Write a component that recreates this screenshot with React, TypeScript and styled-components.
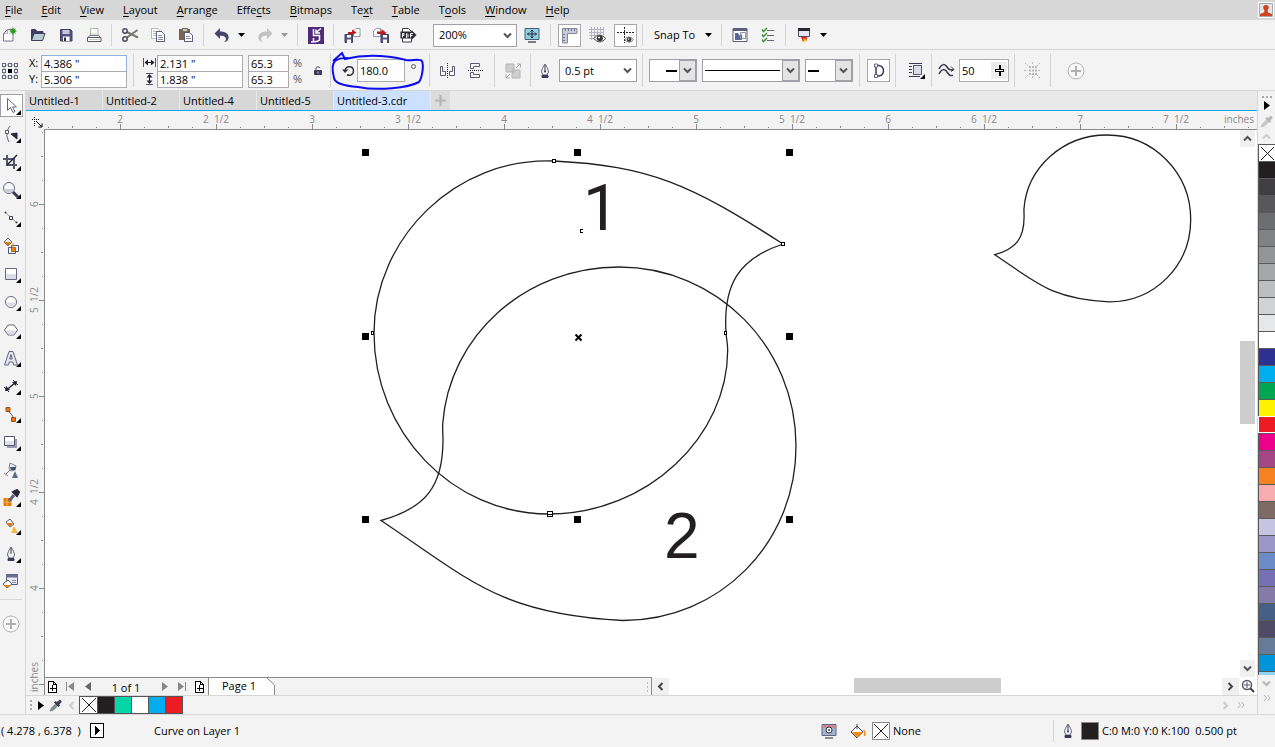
import React from "react";
import styled, { createGlobalStyle } from "styled-components";

const INK = "#3a3a58";
const LINE = "#d7d7d7";
const FACE = "#f3f3f3";

const GlobalStyle = createGlobalStyle`
  * { box-sizing: border-box; }
  body { margin: 0; background: ${FACE}; color: #000; }
  body, button, input, select { font-family: "Open Sans", "Noto Sans", sans-serif; font-size: 11px; line-height: 16px; }
  button { border: 0; padding: 0; background: none; color: inherit; display: inline-flex; align-items: center; justify-content: center; }
  svg { display: block; flex: none; }
`;

/* ---------- shared parts ---------- */

const Window = styled.div`
  display: flex;
  flex-direction: column;
  min-height: 100vh;
`;

const MenuBar = styled.nav`
  display: flex;
  gap: 19px;
  height: 20px;
  padding: 0 1px 0 5px;
  background: ${LINE};
`;

const MenuItem = styled.button`
  u { text-underline-offset: 2px; }
`;

const AccountButton = styled.button`
  width: 16px;
  height: 16px;
  margin: 2px 0 0 auto;
  background: #fff;
  border: 1px solid #fff;
`;

const ToolBar = styled.div<{ $h: number; $left?: number }>`
  display: flex;
  align-items: center;
  height: ${(p) => p.$h}px;
  padding-top: 1px;
  padding-left: ${(p) => p.$left ?? 0}px;
  border-bottom: 1px solid ${LINE};
`;

const ToolButton = styled.button<{ $w?: number; $align?: string }>`
  display: inline-flex;
  align-items: center;
  flex: none;
  width: ${(p) => p.$w ?? 28}px;
  height: 24px;
  justify-content: ${(p) => p.$align ?? "center"};
`;

const ListButton = styled(ToolButton)`
  width: 15px;
  padding-left: 2px;
  justify-content: flex-start;
`;

const Framed = styled.span`
  display: flex;
  align-items: center;
  justify-content: center;
  width: 23px;
  height: 23px;
  background: #fff;
  border: 1px solid #a8a8ac;
`;

const Separator = styled.span<{ $h?: number; $m?: number }>`
  flex: none;
  width: 1px;
  height: ${(p) => p.$h ?? 22}px;
  margin: 0 ${(p) => p.$m ?? 4}px 0 ${(p) => (p.$m ?? 4) - 1}px;
  background: #d4d4d4;
`;

const SelectBox = styled.span<{ $w: number }>`
  position: relative;
  flex: none;
  display: flex;
  width: ${(p) => p.$w}px;
  height: 23px;
  border: 1px solid #a0a0a6;
  background: #fff;
  select {
    appearance: none;
    flex: 1;
    min-width: 0;
    border: 0;
    padding: 0 0 0 5px;
    background: transparent;
    color: #000;
  }
`;

const SelectArrow = styled.span<{ $boxed?: boolean }>`
  position: absolute;
  inset: 0 0 0 auto;
  width: 17px;
  display: flex;
  align-items: center;
  justify-content: center;
  pointer-events: none;
  background: ${(p) => (p.$boxed ? "#e4e4e4" : "transparent")};
  border: ${(p) => (p.$boxed ? "1px solid #a0a0a6" : "0")};
`;

const LineSample = styled.span<{ $l: number; $w: number; $thin?: boolean }>`
  position: absolute;
  left: ${(p) => p.$l}px;
  top: 10px;
  width: ${(p) => p.$w}px;
  height: ${(p) => (p.$thin ? 1 : 2)}px;
  background: #000;
  pointer-events: none;
`;

const SnapButton = styled.button`
  width: 71px;
  height: 24px;
  padding: 0 6px 0 7px;
  justify-content: space-between;
`;

/* ---------- property bar parts ---------- */

const Stack = styled.div<{ $w?: number; $m?: string }>`
  display: flex;
  flex: none;
  flex-direction: column;
  width: ${(p) => (p.$w ? p.$w + "px" : "auto")};
  margin: ${(p) => p.$m ?? "0"};
`;

const SideLabel = styled.label`
  height: 16px;
`;

const Percent = styled.span`
  color: #55555c;
`;

const SideIcon = styled.span`
  display: flex;
  align-items: center;
  justify-content: center;
  height: 16px;
`;

const NumberField = styled.input<{ $accent?: boolean }>`
  width: 100%;
  height: 17px;
  margin-bottom: -1px;
  padding: 0 2px;
  border: 1px solid ${(p) => (p.$accent ? "#8cb4dc" : "#ababb0")};
  background: #fff;
  color: #000;
`;

const TallField = styled.input<{ $w: number }>`
  width: ${(p) => p.$w}px;
  height: 23px;
  padding: 0 2px;
  border: 1px solid #ababb0;
  background: #fff;
  color: #000;
`;

const SliderField = styled.span`
  display: flex;
  flex: none;
  width: 50px;
  height: 23px;
  border: 1px solid #ababb0;
  background: #fff;
  input { width: 31px; padding: 0 2px; border: 0; background: none; color: #000; }
  button { width: 16px; background: #ececec; margin: 2px 0; }
`;

const DegreeRing = styled.span`
  width: 5px;
  height: 5px;
  margin: 0 0 8px 6px;
  border: 1px solid #555;
  border-radius: 50%;
`;

const PropertyWrap = styled.div`
  position: relative;
`;

const Annotation = styled.svg`
  position: absolute;
  left: 328px;
  top: 0;
  pointer-events: none;
`;

/* ---------- work area ---------- */

const WorkArea = styled.div`
  display: flex;
  flex: 1;
`;

const ToolBox = styled.div`
  display: flex;
  flex-direction: column;
  flex: none;
  width: 26px;
  border-right: 1px solid ${LINE};
`;

const Tool = styled.button<{ $active?: boolean }>`
  position: relative;
  width: 23px;
  height: 23px;
  margin: 3px 0 2px;
  padding-left: 1px;
  justify-content: flex-start;
  background: ${(p) => (p.$active ? "#fff" : "transparent")};
  border: 1px solid ${(p) => (p.$active ? "#a0a0a6" : "transparent")};
`;

const Flyout = styled.span`
  position: absolute;
  right: 1px;
  bottom: 1px;
  border-left: 5px solid transparent;
  border-bottom: 5px solid #000;
`;

const ToolBoxRule = styled.hr`
  width: 22px;
  height: 1px;
  margin: 4px 0 12px;
  border: 0;
  background: ${LINE};
`;

const Center = styled.div`
  display: flex;
  flex-direction: column;
  flex: 1;
  min-width: 0;
`;

const TabStrip = styled.div`
  display: flex;
  height: 20px;
  background: #e9e9e9;
  border-bottom: 1px solid #00a8f8;
`;

const DocTab = styled.button<{ $active?: boolean }>`
  width: ${(p) => (p.$active ? 97 : 77)}px;
  padding-left: 3px;
  justify-content: flex-start;
  background: ${(p) => (p.$active ? "#cbe1ff" : LINE)};
  border-right: 1px solid #e9e9e9;
`;

const NewTab = styled.button`
  width: 19px;
  background: #dcdcdc;
`;

const ticks = (dir: string) =>
  `linear-gradient(${dir}, #8a8a8a 1px, transparent 1px)`;

const RulerRow = styled.div`
  display: flex;
  height: 19px;
  background: ${FACE};
`;

const RulerOrigin = styled.span`
  flex: none;
  width: 18px;
  padding: 6px 0 0 6px;
`;

const RulerText = styled.div`
  color: #8a8a8a;
  font-size: 10px;
  line-height: 16px;
  white-space: pre;
`;

const HRuler = styled(RulerText)`
  display: flex;
  flex: 1;
  min-width: 0;
  overflow: hidden;
  padding-left: 28px;
  border-bottom: 1px solid #8a8a8a;
  background-image: ${ticks("to right")}, ${ticks("to right")}, ${ticks("to right")};
  background-size: 96px 5px, 48px 2px, 24px 1px;
  background-position: 76px 100%, 28px calc(100% - 1px), 4px calc(100% - 1px);
  background-repeat: repeat-x;
`;

const HMark = styled.span`
  flex: none;
  width: 96px;
  text-align: center;
`;

const HUnit = styled.span`
  margin-left: auto;
  padding-right: 4px;
`;

const CanvasRow = styled.div`
  display: flex;
  flex: 1;
`;

const VRuler = styled(RulerText)`
  display: flex;
  flex-direction: column;
  flex: none;
  width: 19px;
  padding-top: 26px;
  border-right: 1px solid #8a8a8a;
  background-image: ${ticks("to bottom")}, ${ticks("to bottom")}, ${ticks("to bottom")};
  background-size: 5px 96px, 2px 48px, 1px 24px;
  background-position: 100% 74px, calc(100% - 1px) 26px, calc(100% - 1px) 2px;
  background-repeat: repeat-y;
`;

const VMark = styled.span<{ $h: number; $end?: boolean }>`
  height: ${(p) => p.$h}px;
  width: 16px;
  text-align: ${(p) => (p.$end ? "start" : "center")};
  writing-mode: vertical-rl;
  transform: rotate(180deg);
`;

const CanvasColumn = styled.div`
  display: flex;
  flex-direction: column;
  flex: 1;
  min-width: 0;
`;

const CanvasMain = styled.div`
  display: flex;
  flex: 1;
  background: #fff;
`;

const Canvas = styled.main`
  flex: 1;
  min-width: 0;
  min-height: 547px;
  overflow: hidden;
  background: #fff;
`;

const VScroll = styled.div`
  display: flex;
  flex-direction: column;
  flex: none;
  width: 17px;
  padding-right: 2px;
  background: #fff;
`;

const ScrollButton = styled.button<{ $w?: number }>`
  flex: none;
  width: ${(p) => p.$w ?? 17}px;
  height: 17px;
  background: #f0f0f0;
`;

const Track = styled.div<{ $vertical?: boolean }>`
  display: flex;
  flex-direction: ${(p) => (p.$vertical ? "column" : "row")};
  flex: 1;
`;

const TrackSpace = styled.span<{ $grow: number }>`
  flex: ${(p) => p.$grow} 1 0;
`;

const Thumb = styled.span<{ $w: number; $h: number }>`
  flex: none;
  width: ${(p) => p.$w}px;
  height: ${(p) => p.$h}px;
  background: #cdcdcd;
`;

const PageBar = styled.div`
  display: flex;
  height: 18px;
`;

const PageNav = styled.div`
  display: flex;
  align-items: center;
  width: 607px;
  flex: none;
  border-top: 1px solid #8a8a8a;
  border-right: 1px solid #8a8a8a;
`;

const NavButton = styled.button<{ $w: number }>`
  flex: none;
  width: ${(p) => p.$w}px;
  height: 16px;
`;

const PageCount = styled.span`
  width: 60px;
  padding-top: 2px;
  text-align: center;
`;

const PageTab = styled.button`
  position: relative;
  height: 17px;
  width: 67px;
  padding: 0 16px 1px 13px;
  justify-content: flex-start;
  white-space: nowrap;
  background: #fff;
  border-left: 1px solid #8a8a8a;
`;

const TabCorner = styled.svg`
  position: absolute;
  right: 0;
  top: 0;
`;

const Grip = styled.span`
  width: 3px;
  height: 12px;
  margin-left: auto;
  margin-right: 2px;
  background: radial-gradient(circle, #bbb 1px, transparent 1px) 0 0 / 3px 4px;
`;

const HScroll = styled.div`
  display: flex;
  flex: 1;
  background: #fff;
  padding: 1px 1px 0 0;
`;

const PaletteBar = styled.div`
  display: flex;
  align-items: center;
  height: 19px;
  padding: 0 8px 0 3px;
  border-top: 1px solid ${LINE};
`;

const SwatchRow = styled.div`
  display: flex;
  border: 1px solid #555;
`;

const DocSwatch = styled.button<{ $c: string }>`
  width: 17px;
  height: 16px;
  background: ${(p) => p.$c};
  & + & { border-left: 1px solid #555; }
`;

const ColorColumn = styled.aside`
  display: flex;
  flex: none;
  flex-direction: column;
  align-items: center;
  width: 18px;
  padding-top: 5px;
  border-left: 1px solid ${LINE};
`;

const Swatch = styled.button<{ $c: string; $selected?: boolean; $h?: number }>`
  width: 100%;
  height: ${(p) => p.$h ?? 17}px;
  background: ${(p) => p.$c};
  border-left: 1px solid ${(p) => (p.$selected ? "#fff" : "#5a5a5a")};
  border-top: 1px solid ${(p) => (p.$selected ? "#fff" : "#5a5a5a")};
  border-bottom: ${(p) => (p.$selected ? "1px solid #fff" : "0")};
`;

const PaletteButton = styled.button<{ $h: number }>`
  width: 16px;
  height: ${(p) => p.$h}px;
`;

/* ---------- status bar ---------- */

const StatusBar = styled.footer`
  display: flex;
  align-items: center;
  height: 33px;
  padding: 0 0 0 1px;
  border-top: 1px solid ${LINE};
  white-space: pre;
`;

const StatusText = styled.span<{ $w?: number }>`
  width: ${(p) => (p.$w ? p.$w + "px" : "auto")};
`;

const StatusGroup = styled.div<{ $w: number }>`
  display: flex;
  flex: none;
  align-items: center;
  width: ${(p) => p.$w}px;
`;

const StatusIcon = styled.span<{ $w: number }>`
  flex: none;
  width: ${(p) => p.$w}px;
`;

const StatusButton = styled.button<{ $w: number }>`
  flex: none;
  width: ${(p) => p.$w}px;
  justify-content: flex-start;
`;

const ColorBox = styled.span<{ $c: string }>`
  flex: none;
  width: 18px;
  height: 18px;
  margin-right: 3px;
  background: ${(p) => p.$c};
  border: 1px solid #8a8a8a;
`;

/* ---------- icons ---------- */

type IconProps = { w: number; h: number; children: React.ReactNode; crisp?: boolean };
const Icon = ({ w, h, children, crisp }: IconProps) => (
  <svg width={w} height={h} viewBox={`0 0 ${w} ${h}`} fill="none" stroke={INK}
    shapeRendering={crisp ? "crispEdges" : "auto"} aria-hidden="true">
    {children}
  </svg>
);

const Caret = ({ c = "#000" }: { c?: string }) => (
  <Icon w={7} h={4}><path d="M0 0h7L3.500 4z" fill={c} stroke="none" /></Icon>
);
const ChevronDown = ({ c = "#555" }: { c?: string }) => (
  <Icon w={9} h={7}><path d="M1 1.500L4.500 5 8 1.500" stroke={c} strokeWidth="2" /></Icon>
);
const ChevronUp = ({ c = "#555" }: { c?: string }) => (
  <Icon w={9} h={7}><path d="M1 5.500L4.500 2 8 5.500" stroke={c} strokeWidth="2" /></Icon>
);
const ChevronLeft = ({ c = "#444" }: { c?: string }) => (
  <Icon w={7} h={9}><path d="M5.500 1L2 4.500 5.500 8" stroke={c} strokeWidth="2" /></Icon>
);
const ChevronRight = ({ c = "#444" }: { c?: string }) => (
  <Icon w={7} h={9}><path d="M1.500 1L5 4.500 1.500 8" stroke={c} strokeWidth="2" /></Icon>
);
const DoubleChevron = () => (
  <Icon w={8} h={8}><path d="M1 1l2.500 3L1 7M4.500 1L7 4 4.500 7" stroke="#b5b5b5" /></Icon>
);
const PlayTriangle = ({ c = "#000", left = false }: { c?: string; left?: boolean }) => (
  <Icon w={6} h={9}><path d={left ? "M6 0v9L0 4.500z" : "M0 0v9l6-4.500z"} fill={c} stroke="none" /></Icon>
);
const EndTriangle = ({ left = false }: { left?: boolean }) => (
  <Icon w={8} h={9}>
    <path d={left ? "M8 0v9L2 4.500z" : "M0 0v9l6-4.500z"} fill="#888" stroke="none" />
    <path d={left ? "M.5 0v9" : "M7.500 0v9"} stroke="#888" />
  </Icon>
);
const CirclePlus = () => (
  <Icon w={18} h={18}>
    <circle cx="9" cy="9" r="8" stroke="#b5b5b5" fill="#f7f7f7" />
    <path d="M9 4v10M4 9h10" stroke="#b0b0b0" strokeWidth="2" />
  </Icon>
);
const PageAdd = () => (
  <Icon w={11} h={12} crisp>
    <path d="M1.500.5h5l3 3v8h-8z" stroke="#000" fill="#fff" />
    <path d="M5.500 4v6M3 7.500h6" stroke="#000" />
    <path d="M6.500.5v3h3" stroke="#000" />
  </Icon>
);
const Pen = () => (
  <Icon w={12} h={16}>
    <path d="M6 1C4 4 2.500 7 2.500 9L4 12h4l1.500-3C9.500 7 8 4 6 1z" fill="#f2f2f6" stroke="#62627c" />
    <path d="M6 2v6" stroke="#3a3a58" /><circle cx="6" cy="8.500" r="1" fill="#3a3a58" stroke="none" />
    <path d="M3 12.500h6v2H3z" fill="#3a3a58" />
  </Icon>
);
const Dropper = ({ c = "#3a3a4e", t = "#7a8a90" }: { c?: string; t?: string }) => (
  <Icon w={13} h={13}>
    <path d="M1 12l1.500-3L7 4.500 9 6.500 4.500 11z" fill={t} stroke={t} />
    <path d="M5.500 3.500l4 4 1.200-1.200-.8-.8 2-2.200c.8-1-.8-2.600-1.900-1.800l-2 2-.9-.9z" fill={c} stroke={c} />
  </Icon>
);
const NewDoc = () => (
  <Icon w={17} h={16}>
    <path d="M3.500 6.500l4-4h5.500v11.500h-9.500z" fill="#fff" stroke="#77778c" />
    <path d="M3.500 6.500h4v-4" stroke="#a8a8b8" />
    <path d="M13 .5v7M9.500 4h7M10.500 1.500l5 5M15.500 1.500l-5 5" stroke="#2b9a1e" />
    <circle cx="13" cy="4" r="2.500" fill="#2b9a1e" stroke="none" />
  </Icon>
);
const Open = () => (
  <Icon w={16} h={16}>
    <path d="M1.500 13V2.500h4l1.500 2h6V7" fill="#3f3f66" stroke="#3f3f5c" />
    <path d="M1.500 13.500l2.500-7h11l-2.500 7z" fill="#b8ccd6" stroke="#3f3f5c" />
  </Icon>
);
const Floppy = () => (
  <Icon w={14} h={14}>
    <path d="M1.500 1.500h10l1.500 1.500v10h-11.500z" fill="#54547c" stroke="#3f3f66" />
    <path d="M3.500 2h7v4h-7z" fill="#c8c8dc" stroke="none" />
    <path d="M4 8.500h6.500V13H4z" fill="#fff" stroke="none" /><path d="M5 9.500h2V13H5z" fill="#2c2c50" stroke="none" />
  </Icon>
);
const Printer = () => (
  <Icon w={16} h={16}>
    <path d="M4.500 9V1.500h7.500V9" fill="#fff" stroke="#a9b8a4" /><path d="M5 6h7v3H5z" fill="#cfe8d8" stroke="none" />
    <path d="M1.500 12l2-3.500h9.500l2 3.500" stroke="#77778c" />
    <path d="M1.500 10.500h13.500v4H1.500z" fill="#fff" stroke="#55556e" /><path d="M3 12.500h11" stroke="#c8c8d4" />
  </Icon>
);
const Scissors = () => (
  <Icon w={18} h={16}>
    <path d="M6 5l11 5.500M6 10.500L16.500 3" stroke="#77776e" strokeWidth="2" />
    <circle cx="4" cy="4" r="2.200" stroke="#4a4a62" strokeWidth="1.500" />
    <circle cx="4" cy="12" r="2.200" stroke="#4a4a62" strokeWidth="1.500" />
  </Icon>
);
const Copy = () => (
  <Icon w={16} h={16} crisp>
    <path d="M1.500 1.500h6l2 2v8h-8z" fill="#fff" stroke="#a9c4ba" /><path d="M3 4.500h4M3 6.500h4M3 8.500h4" stroke="#a9c4ba" />
    <path d="M6.500 4.500h5l3 3v7h-8z" fill="#fff" stroke="#5c5c80" /><path d="M8 8.500h4M8 10.500h5M8 12.500h5" stroke="#8c8ca6" />
  </Icon>
);
const Paste = () => (
  <Icon w={16} h={16} crisp>
    <path d="M1 2h11v11H1z" fill="#7a654c" stroke="none" /><path d="M4 1h5v3H4z" fill="#c9c9c9" stroke="#77705f" />
    <path d="M6.500 5.500h5l3 3v6h-8z" fill="#fff" stroke="#5c5c80" /><path d="M8 9.500h4M8 11.500h5" stroke="#8c8ca6" />
  </Icon>
);
const Undo = ({ c = "#46466a", flip = false }: { c?: string; flip?: boolean }) => (
  <Icon w={16} h={16}>
    <g transform={flip ? "translate(16 0) scale(-1 1)" : undefined}>
      <path d="M6 1v3.500c6 0 9 2.500 8.500 6.500-.3 2.500-2 4-4.500 4 2-1.500 2.500-3 1.500-4.500C10.500 9 9 8.700 6 8.700V12L.5 6.500z" fill={c} stroke="none" />
    </g>
  </Icon>
);
const SearchContent = () => (
  <Icon w={16} h={17}>
    <path d="M0 0h16v17H0z" fill="#4e2a78" stroke="none" />
    <path d="M13 1.500L8.500 5M8 2.500V6h4M5.500 2v6.500h6V13c-1.500 1.500-4 2-8.500 2M5.500 15v-4" stroke="#fff" strokeWidth="1.500" />
  </Icon>
);
const Transfer = ({ out = false }: { out?: boolean }) => (
  <Icon w={17} h={16}>
    {out
      ? <><path d="M1.500 9.500V4l3-2.500h4v8z" fill="#fff" stroke="#8a9a9a" /><path d="M5 4.500h4.500V2l5 4-5 4V7H5z" fill="#c0181c" stroke="none" /></>
      : <><path d="M9.500 9.500V4l2.500-2.500h4v8z" fill="#fff" stroke="#8a9a9a" /><path d="M4 5h4V2.500L12.500 5.500 8 8.500V7H4z" fill="#c0181c" stroke="none" /></>}
    <g transform={out ? "translate(8 7)" : "translate(0 7)"}>
      <path d="M1 .5h7.500v8H1z" fill="#54547c" stroke="#3f3f66" />
      <path d="M3 1h4v2.500H3zM3 5.500h4V9H3z" fill="#fff" stroke="none" />
    </g>
  </Icon>
);
const Pdf = () => (
  <Icon w={17} h={16}>
    <path d="M2.500 5V1.500h6l3 3M2.500 11v4h9v-3" fill="#fff" stroke="#3a3a4c" />
    <path d="M.5 4.500h11V3l5 5-5 5v-1.500H.5z" fill="#2a2a34" stroke="none" />
    <path d="M2.500 10.500v-4h1.500v2H2.500M6.500 6.500v4H7l1-1v-2l-1-1zM10.500 10.500v-4H13M10.500 8.500h2" stroke="#fff" />
  </Icon>
);
const FullScreen = () => (
  <Icon w={16} h={16}>
    <path d="M1 1.500h14v11H1z" fill="#8fd0e4" stroke="#44607c" />
    <path d="M8 3v8M3.500 7h9M6.500 4.500L8 3l1.500 1.500M6.500 9.500L8 11l1.500-1.500M5 5.500L3.500 7 5 8.500M11 5.500L12.500 7 11 8.500" stroke="#223" />
    <path d="M4 15h8" stroke="#7a7a8c" strokeWidth="2" />
  </Icon>
);
const Rulers = () => (
  <Icon w={17} h={17}>
    <path d="M1.500 1.500h14.500v5H6.500V16h-5z" fill="#c8cdd8" stroke="#8088a0" />
    <path d="M4.500 2v2M7.500 2v2M10.500 2v2M13.500 2v2M2 7.500h2M2 10.500h2M2 13.500h2" stroke="#6c7490" />
  </Icon>
);
const Eye = () => (
  <g><path d="M5 11.500C8 7 13.500 7 16.500 11.500c-3 4.500-8.500 4.500-11.500 0z" fill="#ececec" stroke="#4c4c50" />
    <circle cx="10.800" cy="11.300" r="3" fill="#333" stroke="none" /><circle cx="10" cy="10.500" r="1" fill="#fff" stroke="none" /></g>
);
const GridEye = () => (
  <Icon w={17} h={17}>
    <path d="M2.500 0v13M5.500 0v12M8.500 0v8M11.500 0v7M14.500 0v8M0 2.500h15M0 5.500h15M0 8.500h7M0 11.500h5" stroke="#b4b4c6" /><Eye />
  </Icon>
);
const GuideEye = () => (
  <Icon w={17} h={17}>
    <path d="M7.500 0v16M0 5.500h17" stroke="#222" strokeDasharray="2 1" /><g transform="translate(4 4) scale(.75)"><Eye /></g>
  </Icon>
);
const Options = () => (
  <Icon w={16} h={16}>
    <path d="M1 1.500h14v13H1z" fill="#fff" stroke="#5c5c80" /><path d="M1 2.500h14" stroke="#5c5c80" strokeWidth="3" />
    <path d="M3 6h3l2 3 2-2v6H3z" fill="#5a6896" stroke="none" /><path d="M8.500 5.500h5v6h-5z" stroke="#8890b4" />
  </Icon>
);
const Checks = () => (
  <Icon w={14} h={16}>
    <path d="M6 3.500h7M6 8.500h7M6 13.500h7" stroke="#66667e" />
    <path d="M1 2.500l1.500 2L6 1M1 7.500l1.500 2L6 6M1 12.500l1.500 2L6 11" stroke="#3c9636" strokeWidth="1.500" />
  </Icon>
);
const Launcher = () => (
  <Icon w={14} h={16}>
    <path d="M1.500 1.500h11v8h-11z" fill="#e4e4f0" stroke="#4c4c6c" /><path d="M1 2.500h12" stroke="#26262e" strokeWidth="3" />
    <path d="M4 10h6l-.5 4-2-1.500L6 15z" fill="#e8281c" stroke="none" /><path d="M6.500 11.500l2.500.5-2 4z" fill="#ffc400" stroke="none" />
  </Icon>
);
const ObjectOrigin = () => (
  <Icon w={16} h={16}>
    <path d="M2 2h12v12H2z" stroke="#9a9aaa" />
    {[0.5, 6.5, 12.5].map((x) => [0.5, 6.5, 12.5].map((y) => {
      const mid = x === 6.5 && y === 6.5;
      return <rect key={`${x}-${y}`} x={x} y={y} width="3" height="3" fill={mid ? "#000" : FACE} stroke={mid ? "#000" : "#66667c"} />;
    }))}
  </Icon>
);
const WidthIcon = () => (
  <Icon w={13} h={9}><path d="M.5 0v9M12.500 0v9" stroke="#55556c" /><path d="M2 4.500h9" stroke="#222230" /><path d="M5 1.500v6L1.500 4.500zM8 1.500v6l3.500-3z" fill="#222230" stroke="none" /></Icon>
);
const HeightIcon = () => (
  <Icon w={9} h={12}><path d="M1 .5h7M1 11.500h7" stroke="#55556c" /><path d="M4.500 2v8" stroke="#222230" /><path d="M1.500 4.500h6l-3-3.500zM1.500 7.500h6l-3 3.500z" fill="#222230" stroke="none" /></Icon>
);
const Lock = () => (
  <Icon w={8} h={9}><path d="M2 4V2c0-1.500 4-1.500 4 0" stroke="#4c4c6c" /><path d="M.5 4.500h7v4h-7z" fill="#3c3c5c" /><path d="M4 5.500v2" stroke="#ccd" /></Icon>
);
const Rotate = () => (
  <Icon w={13} h={13}><path d="M3 7c0-6 8.500-5.500 8.500 0 0 4-4 5-6.500 3.800" stroke="#333340" strokeWidth="1.500" /><path d="M0 5.500h6.500L3 9z" fill="#333340" stroke="none" /></Icon>
);
const MirrorH = () => (
  <Icon w={17} h={15}><path d="M8.500 0v15" stroke="#222" strokeDasharray="1 1" />
    <path d="M1.500 3.500h2v5h3v4h-5zM15.500 3.500h-2v5h-3v4h5z" stroke="#5c5c70" fill="#fafafa" /></Icon>
);
const MirrorV = () => (
  <Icon w={15} h={17}><path d="M0 8.500h15" stroke="#222" strokeDasharray="1 1" />
    <path d="M2.500 1.500h9v3h-6v2h-3zM2.500 15.500h9v-3h-6v-2h-3z" stroke="#5c5c70" fill="#fafafa" /></Icon>
);
const Ungroup = () => (
  <Icon w={17} h={16}><path d="M1 1h8v8H1zM7 7h8v8H7z" fill="#cfcfcf" stroke="#b4b4b4" />
    <path d="M11 5l4-4M12 1h3.500v3.500M5 11l-4 4M1 11.500V15h3.500" stroke="#a8a8a8" /></Icon>
);
const CloseCurve = () => (
  <Icon w={12} h={16}><path d="M3 2.500h3c6 1 6 9.500 0 10.500H3M3 4v8" stroke="#3a3a58" strokeWidth="1.500" />
    <path d="M1.500 1h3v3h-3zM1.500 11.500h3v3h-3z" fill="#fff" stroke="#66667c" /></Icon>
);
const WrapText = () => (
  <Icon w={18} h={17}><path d="M1 1.500h13M1 4.500h3M1 7.500h3M1 10.500h3M1 14.500h11" stroke="#3a3a58" />
    <path d="M5.500 3.500h8v9h-8z" fill="#dcdce8" stroke="#55556c" /><path d="M17 12v5h-5z" fill="#000" stroke="none" /></Icon>
);
const Smooth = () => (
  <Icon w={17} h={15}><path d="M1 6c3-6 6-5 8-2s3 3 6.500 2.500M1 11c3-6 6-5 8-2s3 4 6 3.500" stroke="#3a3a4c" strokeWidth="1.500" />
    <path d="M13 3.500l3 3-3 2" stroke="#3a3a4c" /></Icon>
);
const SliderKnob = () => (
  <Icon w={11} h={11} crisp><path d="M5.500 0v11" stroke="#000" strokeWidth="2" /><path d="M1.500 4.500h8v2h-8z" fill="#fff" stroke="#000" /></Icon>
);
const BoundingBox = () => (
  <Icon w={17} h={17}>
    <path d="M5 5h8M5 8.500h8M5 12h8" stroke="#b8b8b8" strokeWidth="2" strokeDasharray="2 1" />
    <path d="M1 1l3 3M16 1l-3 3M1 16l3-3M16 16l-3-3M8.500 0v3M8.500 14v3M0 8.500h3M14 8.500h3" stroke="#b8b8b8" strokeDasharray="2 1" />
  </Icon>
);
const Person = () => (
  <Icon w={14} h={14}><path d="M.5.500h13v13H.5z" fill="#dfe8ec" stroke="#a0a8b0" />
    <path d="M7 2c4 0 3 4 1.500 5.500L9 9.500l4 1.500v2H1v-2l4-1.500.5-2C4 6 3 2 7 2z" fill="#cf4420" stroke="none" /></Icon>
);

const toolIcons: { name: string; fly?: boolean; icon: React.ReactNode }[] = [
  { name: "Pick", fly: true, icon: <path d="M5.500 1.500v12l3-3 2.500 5 2-1-2.500-4.500h4z" fill="#fff" stroke="#66667c" /> },
  { name: "Shape", fly: true, icon: <><path d="M8 1C4 6 4 11 7 17" stroke="#62627c" /><path d="M3.500 5.500h3v3h-3z" fill="#fff" stroke="#55556c" /><path d="M9 9l6-1v6z" fill="#26263a" stroke="#26263a" /></> },
  { name: "Crop", fly: true, icon: <><path d="M1 6h11v10M5 2v10h10" stroke="#55556c" strokeWidth="2" /><path d="M5 12L15 2" stroke="#26263a" strokeWidth="1.500" /></> },
  { name: "Zoom", fly: true, icon: <><circle cx="7" cy="7" r="5.500" fill="#f8f8fb" stroke="#66667e" /><path d="M2 8h10c-1 5-9 5-10 0z" fill="#cfcfdc" stroke="none" /><path d="M11 11l5 5" stroke="#3c3c4c" strokeWidth="3" /></> },
  { name: "Freehand", fly: true, icon: <><path d="M3 3l12 11" stroke="#8c8c98" /><path d="M7.500 7.500h3v3h-3z" fill="#fff" stroke="#3c3c4c" /><path d="M3 3l1 1M14 13l1 1" stroke="#3c3c4c" strokeWidth="2" /></> },
  { name: "Smart fill", icon: <><path d="M2 5l4-4 4 4-4 4z" fill="#eee" stroke="#66667e" /><path d="M2 5h7L6 9z" fill="#e07810" stroke="none" /><path d="M9.500 8.500h7v6h-7zM6.500 10.500h7v6h-7z" fill="#f3f3f3" stroke="#4c5c80" /><path d="M10 11h3v3h-3zM11 6v5" fill="#f08000" stroke="#f08000" /></> },
  { name: "Rectangle", fly: true, icon: <><path d="M3.500 3.500h11v11h-11z" fill="#fff" stroke="#66667e" /><path d="M4 9h10v5H4z" fill="#dcdce6" stroke="none" /></> },
  { name: "Ellipse", fly: true, icon: <><circle cx="9" cy="9" r="5.500" fill="#fff" stroke="#66667e" /><path d="M4 9.500h10c-1 5-9 5-10 0z" fill="#dcdce6" stroke="none" /></> },
  { name: "Polygon", fly: true, icon: <><path d="M6 4h6l3.500 5-3.500 5H6L2.500 9z" fill="#fff" stroke="#66667e" /><path d="M3.500 9.500h11l-3 4h-5z" fill="#dcdce6" stroke="none" /></> },
  { name: "Text", fly: true, icon: <path d="M7 2.500h4L15.500 16H11.500L10.800 13H7.200L6.500 16H2.500zM9 5.500L7.800 10h2.400z" fill="#e4e4ee" stroke="#66667e" /> },
  { name: "Dimension", fly: true, icon: <><path d="M4 13.500L14 5" stroke="#222230" strokeWidth="1.500" /><path d="M2 10l5 5M11 3l5 5" stroke="#222230" /><path d="M3 14l1-5 4 4zM15 4l-1 5-4-4z" fill="#222230" stroke="none" /></> },
  { name: "Connector", fly: true, icon: <><path d="M6 5l6 8" stroke="#62627c" /><path d="M4 2.500h4v4H4zM9.500 12.500h4v4h-4z" fill="#f07800" stroke="#94502c" /></> },
  { name: "Drop shadow", fly: true, icon: <><path d="M5 6h10v9H5z" fill="#9a9ab2" stroke="none" /><path d="M2.500 3.500h10v9h-10z" fill="#fff" stroke="#55556c" /><path d="M3 8h9v4H3z" fill="#e0e0ea" stroke="none" /></> },
  { name: "Transparency", icon: <><path d="M8 2l6 3-1 4-4 1-2-3zM8 9l-4 4M2 12l4 3" fill="#eef" stroke="#7c7c90" /><path d="M8 6h6l-1 3H9z" fill="#3c5470" stroke="none" /><path d="M13 10l3 7h-6z" fill="#5c6c88" stroke="none" /></> },
  { name: "Color eyedropper", fly: true, icon: <><path d="M1.500 9h8v8h-8z" fill="#e87800" stroke="none" /><path d="M5 9v8M2 13h7" stroke="#fbb45c" /><path d="M7 12l5-6" stroke="#62627c" strokeWidth="3" /><path d="M11 3l4 4 2-4-2-2z" fill="#26263a" stroke="#26263a" strokeWidth="2" /></> },
  { name: "Interactive fill", fly: true, icon: <><path d="M4 5l4-3 4 5-4 3z" fill="#fff" stroke="#55556c" /><path d="M4 6h7l-3 4z" fill="#e07810" stroke="none" /><path d="M12 9l4 7H9z" fill="#f4b848" stroke="none" /></> },
  { name: "Outline pen", fly: true, icon: <g transform="translate(3 1)"><path d="M6 1C4 4 2.500 7 2.500 9L4 12h4l1.500-3C9.500 7 8 4 6 1z" fill="#f2f2f6" stroke="#62627c" /><path d="M6 2v6" /><path d="M3 12.500h6v2H3z" fill={INK} /></g> },
  { name: "Fill", icon: <><path d="M4.500 1.500h11v10h-11z" fill="#e8eaf0" stroke="#55607c" /><path d="M4 3h12" stroke="#66708c" strokeWidth="3" /><path d="M10 7.500h4M10 9.500h4" stroke="#8890a4" /><path d="M1 11l5-4 4 4-5 4z" fill="#fff" stroke="#55556c" /><path d="M2 12h7l-4 3z" fill="#f08000" stroke="none" /></> },
];

/* ---------- drawing ---------- */

const blob =
  "M381 520.5C426 508 443 486 443 440C443 434 442.500 430 442.700 424C449 336 525 267 619 267C717 267 796 347 796 446C796 543 720 620.500 623 620.500C500 614 470 580 381 520.500Z";
const leaf =
  "M554 161C650 166 690 184 783 244C738 259 723 285 726 333C726.500 339 727.500 342 727.700 350C727.700 436 648 514 549 514C452 514 374 432 374 333C374 238 456 157 554 161Z";

const Drawing = () => (
  <svg width="1195" height="547" viewBox="45 130 1195 547" fill="none" stroke="#231f20" aria-label="Curves 1 and 2">
    <path d={leaf} strokeWidth="1.300" />
    <path d={blob} strokeWidth="1.300" />
    <path d={blob} strokeWidth="1.300" transform="translate(815 9) scale(.472)" vectorEffect="non-scaling-stroke" />
    <g fill="#231f20" stroke="none" fontSize="64">
      <text x="583" y="230" fontFamily="Roboto, sans-serif">1</text>
      <text x="664" y="558" fontFamily="Liberation Sans, sans-serif">2</text>
    </g>
    <g fill="#000" stroke="none" shapeRendering="crispEdges">
      {[362, 574, 786].map((x) => [149, 333, 516].map((y) =>
        x === 574 && y === 333 ? null : <rect key={`${x}-${y}`} x={x} y={y} width="7" height="7" />
      ))}
    </g>
    <path d="M575.500 334.500l6 6M581.500 334.500l-6 6" stroke="#000" strokeWidth="2" />
    <g stroke="#000" fill="#fff" shapeRendering="crispEdges">
      <rect x="552.500" y="159.500" width="3" height="3" />
      <rect x="781.500" y="242.500" width="3" height="3" />
      <rect x="724.500" y="331.500" width="2" height="3" />
      <rect x="371.500" y="331.500" width="2" height="3" />
      <rect x="547.500" y="511.500" width="5" height="5" />
      <path d="M547 514h6" />
      <path d="M582.500 229.500h-2v3h2" fill="none" />
    </g>
  </svg>
);

/* ---------- data ---------- */

const menus: [string, string, string][] = [
  ["", "F", "ile"], ["", "E", "dit"], ["", "V", "iew"], ["", "L", "ayout"], ["", "A", "rrange"], ["Effe", "c", "ts"],
  ["", "B", "itmaps"], ["Te", "x", "t"], ["", "T", "able"], ["T", "o", "ols"], ["", "W", "indow"], ["", "H", "elp"],
];
const hMarks = ["2", "2  1/2", "3", "3  1/2", "4", "4  1/2", "5", "5  1/2", "6", "6  1/2", "7", "7  1/2"];
const vMarks = ["6", "5  1/2", "5", "4  1/2", "4"];
const palette = [
  "#231f20", "#3f3f41", "#58585a", "#6d6e71", "#808285", "#939598", "#a4a8ab", "#bcbec0", "#d1d3d4", "#e6e7e8", "#ffffff",
  "#2e3192", "#00aeef", "#00a651", "#fff200", "#ed1c24", "#ec008c", "#a54686", "#f5821f", "#f9acae", "#7f6a64", "#c7c4e1",
  "#9c96cb", "#6b8cc7", "#7770b5", "#847ba9", "#465f87", "#4f4a66", "#667b97", "#0095da",
];

const Cross = ({ s }: { s: number }) => (
  <Icon w={s} h={s}><path d={`M1 1L${s - 1} ${s - 1}M${s - 1} 1L1 ${s - 1}`} stroke="#222" /></Icon>
);

export default function App() {
  return (
    <Window>
      <GlobalStyle />
      <MenuBar aria-label="Main menu">
        {menus.map(([a, b, c]) => <MenuItem key={a + b + c}><span>{a}<u>{b}</u>{c}</span></MenuItem>)}
        <AccountButton aria-label="Account"><Person /></AccountButton>
      </MenuBar>

      <ToolBar $h={30}>
        <ToolButton $w={24} aria-label="New" $align="flex-start"><NewDoc /></ToolButton>
        <ToolButton aria-label="Open"><Open /></ToolButton>
        <ToolButton aria-label="Save"><Floppy /></ToolButton>
        <ToolButton aria-label="Print"><Printer /></ToolButton>
        <Separator />
        <ToolButton aria-label="Cut"><Scissors /></ToolButton>
        <ToolButton aria-label="Copy"><Copy /></ToolButton>
        <ToolButton aria-label="Paste"><Paste /></ToolButton>
        <Separator />
        <ToolButton aria-label="Undo"><Undo /></ToolButton>
        <ListButton aria-label="Undo list"><Caret /></ListButton>
        <ToolButton aria-label="Redo"><Undo c="#c3c3c3" flip /></ToolButton>
        <ListButton aria-label="Redo list"><Caret c="#999" /></ListButton>
        <Separator />
        <ToolButton aria-label="Search content"><SearchContent /></ToolButton>
        <Separator />
        <ToolButton aria-label="Import"><Transfer /></ToolButton>
        <ToolButton aria-label="Export"><Transfer out /></ToolButton>
        <ToolButton aria-label="Publish to PDF"><Pdf /></ToolButton>
        <Stack $m="0 0 0 11px">
          <SelectBox $w={84}>
            <select aria-label="Zoom level"><option>200%</option></select>
            <SelectArrow><ChevronDown /></SelectArrow>
          </SelectBox>
        </Stack>
        <ToolButton $w={30} aria-label="Full-screen preview"><FullScreen /></ToolButton>
        <Separator />
        <ToolButton aria-label="Show rulers"><Framed><Rulers /></Framed></ToolButton>
        <ToolButton aria-label="Show grid"><GridEye /></ToolButton>
        <ToolButton aria-label="Show guidelines"><Framed><GuideEye /></Framed></ToolButton>
        <Separator />
        <SnapButton>Snap To <Caret /></SnapButton>
        <Separator />
        <ToolButton aria-label="Options"><Options /></ToolButton>
        <ToolButton aria-label="Object properties"><Checks /></ToolButton>
        <Separator />
        <ToolButton aria-label="Application launcher"><Launcher /></ToolButton>
        <ListButton aria-label="Launcher list"><Caret /></ListButton>
      </ToolBar>

      <PropertyWrap>
        <ToolBar $h={41} $left={2}>
          <ObjectOrigin />
          <Stack $w={12} $m="0 0 0 11px">
            <SideLabel htmlFor="pos-x">X:</SideLabel>
            <SideLabel htmlFor="pos-y">Y:</SideLabel>
          </Stack>
          <Stack $w={86}>
            <NumberField id="pos-x" $accent defaultValue={'4.386 "'} />
            <NumberField id="pos-y" defaultValue={'5.306 "'} />
          </Stack>
          <Separator $h={33} $m={7} />
          <Stack $w={16}>
            <SideIcon><WidthIcon /></SideIcon>
            <SideIcon><HeightIcon /></SideIcon>
          </Stack>
          <Stack $w={86}>
            <NumberField aria-label="Width" defaultValue={'2.131 "'} />
            <NumberField aria-label="Height" defaultValue={'1.838 "'} />
          </Stack>
          <Stack $w={41} $m="0 4px 0 5px">
            <NumberField aria-label="Horizontal scale" defaultValue="65.3" />
            <NumberField aria-label="Vertical scale" defaultValue="65.3" />
          </Stack>
          <Stack $w={21}><Percent>%</Percent><Percent>%</Percent></Stack>
          <Lock />
          <Separator $h={33} $m={9} />
          <ToolButton as="span" $w={17}><Rotate /></ToolButton>
          <TallField $w={48} aria-label="Angle of rotation" defaultValue="180.0" />
          <DegreeRing />
          <Separator $h={33} $m={14} />
          <Stack $m="0 0 0 -5px"><ToolButton $w={16} aria-label="Mirror horizontally"><MirrorH /></ToolButton></Stack>
          <ToolButton $w={40} aria-label="Mirror vertically"><MirrorV /></ToolButton>
          <Separator $h={33} $m={0} />
          <ToolButton $w={36} aria-label="Ungroup"><Ungroup /></ToolButton>
          <Separator $h={33} $m={0} />
          <ToolButton as="span" $w={28}><Pen /></ToolButton>
          <SelectBox $w={78}>
            <select aria-label="Outline width"><option>0.5 pt</option></select>
            <SelectArrow><ChevronDown /></SelectArrow>
          </SelectBox>
          <Separator $h={33} $m={6} />
          <SelectBox $w={48}>
            <select aria-label="Start arrowhead" />
            <LineSample $l={16} $w={11} />
            <SelectArrow $boxed><ChevronDown /></SelectArrow>
          </SelectBox>
          <Stack $m="0 5px">
            <SelectBox $w={98}>
              <select aria-label="Line style" />
              <LineSample $l={2} $w={75} $thin />
              <SelectArrow $boxed><ChevronDown /></SelectArrow>
            </SelectBox>
          </Stack>
          <SelectBox $w={48}>
            <select aria-label="End arrowhead" />
            <LineSample $l={2} $w={11} />
            <SelectArrow $boxed><ChevronDown /></SelectArrow>
          </SelectBox>
          <Separator $h={33} $m={7} />
          <ToolButton $w={23} aria-label="Close curve"><Framed><CloseCurve /></Framed></ToolButton>
          <Separator $h={33} $m={6} />
          <ToolButton $w={29} aria-label="Wrap text"><WrapText /></ToolButton>
          <Separator $h={33} $m={1} />
          <ToolButton as="span" $w={26}><Smooth /></ToolButton>
          <SliderField>
            <input aria-label="Freehand smoothing" defaultValue="50" />
            <button aria-label="Smoothing slider"><SliderKnob /></button>
          </SliderField>
          <Separator $h={33} $m={6} />
          <ToolButton $w={23} aria-label="Bounding box"><BoundingBox /></ToolButton>
          <Separator $h={33} $m={7} />
          <ToolButton $w={36} aria-label="Customize"><CirclePlus /></ToolButton>
        </ToolBar>
        <Annotation width="100" height="41" viewBox="328 50 100 41" fill="none" stroke="#0c0cf0" strokeWidth="2">
          <path d="M333 61L342 53L345 59C362 55 385 55 406 60C412 61 420 58 422 61C424 66 422 78 419 82C408 88 378 91 358 87C345 86 335 84 334 78C332 70 332 64 335 61C340 58 342 58 348 58" />
        </Annotation>
      </PropertyWrap>

      <WorkArea>
        <ToolBox>
          {toolIcons.map((t, i) => (
            <Tool key={t.name} $active={i === 0} aria-label={t.name}>
              <Icon w={18} h={18}>{t.icon}</Icon>
              {t.fly && <Flyout />}
            </Tool>
          ))}
          <ToolBoxRule />
          <ToolButton $w={22} aria-label="Customize toolbox"><CirclePlus /></ToolButton>
        </ToolBox>

        <Center>
          <TabStrip>
            {["Untitled-1", "Untitled-2", "Untitled-4", "Untitled-5"].map((t) => <DocTab key={t}>{t}</DocTab>)}
            <DocTab $active>Untitled-3.cdr</DocTab>
            <NewTab aria-label="New document">
              <Icon w={11} h={11}><path d="M5.500 0v11M0 5.500h11" stroke="#b4b4b4" strokeWidth="2" /></Icon>
            </NewTab>
          </TabStrip>
          <RulerRow>
            <RulerOrigin>
              <Icon w={11} h={11}><path d="M0 2.500h7M2.500 0v9" stroke="#000" strokeDasharray="1 1" /><path d="M4 4l6 6M10 6.500V10H6.500" stroke="#000" /></Icon>
            </RulerOrigin>
            <HRuler>
              {hMarks.map((m) => <HMark key={m}>{m}</HMark>)}
              <HUnit>inches</HUnit>
            </HRuler>
          </RulerRow>
          <CanvasRow>
            <VRuler>
              {vMarks.map((m) => <VMark key={m} $h={96}>{m}</VMark>)}
              <VMark $h={56} $end>inches</VMark>
            </VRuler>
            <CanvasColumn>
              <CanvasMain>
                <Canvas><Drawing /></Canvas>
                <VScroll>
                  <ScrollButton $w={15} aria-label="Scroll up"><ChevronUp /></ScrollButton>
                  <Track $vertical>
                    <TrackSpace $grow={194} />
                    <Thumb $w={15} $h={83} />
                    <TrackSpace $grow={236} />
                  </Track>
                  <ScrollButton $w={15} aria-label="Scroll down"><ChevronDown /></ScrollButton>
                </VScroll>
              </CanvasMain>
              <PageBar>
                <PageNav>
                  <NavButton $w={15} aria-label="Add page before"><PageAdd /></NavButton>
                  <NavButton $w={20} aria-label="First page"><EndTriangle left /></NavButton>
                  <NavButton $w={16} aria-label="Previous page"><PlayTriangle c="#666" left /></NavButton>
                  <PageCount>1 of 1</PageCount>
                  <NavButton $w={18} aria-label="Next page"><PlayTriangle c="#888" /></NavButton>
                  <NavButton $w={16} aria-label="Last page"><EndTriangle /></NavButton>
                  <NavButton $w={18} aria-label="Add page after"><PageAdd /></NavButton>
                  <PageTab>Page 1<TabCorner width="8" height="17" viewBox="0 0 8 17"><path d="M0 0h8v7z" fill={FACE} /><path d="M0 0l7.500 7v10" fill="none" stroke="#8a8a8a" /></TabCorner></PageTab>
                  <Grip />
                </PageNav>
                <HScroll>
                  <ScrollButton aria-label="Scroll left"><ChevronLeft /></ScrollButton>
                  <Track>
                    <TrackSpace $grow={185} />
                    <Thumb $w={147} $h={15} />
                    <TrackSpace $grow={221} />
                  </Track>
                  <ScrollButton aria-label="Scroll right"><ChevronRight /></ScrollButton>
                  <NavButton $w={17} aria-label="Navigator">
                    <Icon w={14} h={14}><circle cx="6" cy="6" r="4.500" stroke="#55556c" strokeWidth="1.500" /><path d="M6 3v6M3 6h6" stroke="#55556c" /><path d="M9.500 9.500L13 13" stroke="#3a3a4c" strokeWidth="2" /></Icon>
                  </NavButton>
                </HScroll>
              </PageBar>
            </CanvasColumn>
          </CanvasRow>
          <PaletteBar>
            <Icon w={4} h={12} crisp><path d="M1.500 1v11" stroke="#aaa" strokeWidth="2" strokeDasharray="2 2" /></Icon>
            <NavButton $w={15} aria-label="Document palette menu"><PlayTriangle /></NavButton>
            <NavButton $w={15} aria-label="Pick palette color"><Dropper /></NavButton>
            <NavButton $w={16} aria-label="Previous colors"><ChevronLeft c="#ccc" /></NavButton>
            <SwatchRow>
              <DocSwatch $c="#fff" aria-label="No color"><Cross s={16} /></DocSwatch>
              {["#231f20", "#05d6a7", "#ffffff", "#00aeef", "#ed1c24"].map((c) => <DocSwatch key={c} $c={c} aria-label={c} />)}
            </SwatchRow>
            <TrackSpace $grow={1} />
            <NavButton $w={16} aria-label="Next colors"><ChevronRight c="#ccc" /></NavButton>
            <NavButton $w={16} aria-label="Expand document palette"><DoubleChevron /></NavButton>
          </PaletteBar>
        </Center>

        <ColorColumn>
          <Icon w={12} h={2} crisp><path d="M1 1h10" stroke="#aaa" strokeWidth="2" strokeDasharray="2 2" /></Icon>
          <PaletteButton $h={15} aria-label="Palette menu"><PlayTriangle /></PaletteButton>
          <PaletteButton $h={16} aria-label="Eyedropper"><Dropper c="#b8b8b8" t="#c8c8c8" /></PaletteButton>
          <PaletteButton $h={15} aria-label="Scroll palette up"><ChevronUp c="#ccc" /></PaletteButton>
          <Swatch $c="#fff" aria-label="No color"><Cross s={15} /></Swatch>
          {palette.map((c) => <Swatch key={c} $c={c} $selected={c === "#ed1c24"} aria-label={c} />)}
          <Swatch $c="#8fd3f5" $h={4} aria-label="Next color" />
          <PaletteButton $h={16} aria-label="Scroll palette down"><ChevronDown c="#b5b5b5" /></PaletteButton>
          <PaletteButton $h={14} aria-label="Expand palette"><DoubleChevron /></PaletteButton>
        </ColorColumn>
      </WorkArea>

      <StatusBar>
        <StatusText $w={89}>( 4.278 , 6.378  )</StatusText>
        <StatusButton $w={64} aria-label="Status details">
          <Icon w={15} h={16} crisp><path d="M.5.500h13v14H.5z" fill="#fff" stroke="#000" /><path d="M5 3v9l5-4.500z" fill="#000" stroke="none" /></Icon>
        </StatusButton>
        <StatusText>Curve on Layer 1</StatusText>
        <TrackSpace $grow={1} />
        <StatusGroup $w={232}>
          <StatusIcon $w={29}>
            <Icon w={16} h={16}><path d="M1 1.500h14v11H1z" fill="#9fb4d4" stroke="#66667e" /><path d="M1.500 2h13v3h-13z" fill="#c88a94" stroke="none" /><circle cx="8" cy="7" r="3" fill="#fff" stroke="#333" /><circle cx="8" cy="7" r="1" fill="#333" stroke="none" /><path d="M4 15h8" stroke="#8c8c9c" strokeWidth="2" /></Icon>
          </StatusIcon>
          <StatusIcon $w={22}>
            <Icon w={16} h={16}><path d="M1 9l6-6 6 6-6 6z" fill="#fff" stroke="#44445c" /><path d="M2 9h11l-5.500 6z" fill="#f08a10" stroke="none" /><path d="M7 6V1" stroke="#44445c" /><path d="M13.500 7c2 2 1.500 4 1 6" stroke="#f08a10" strokeWidth="1.500" /></Icon>
          </StatusIcon>
          <ColorBox $c="#fff"><Cross s={16} /></ColorBox>
          <StatusText>None</StatusText>
        </StatusGroup>
        <Separator $m={1} />
        <StatusGroup $w={220}>
          <StatusIcon $w={26}><Icon w={19} h={16}><g transform="translate(7 0)"><Pen /></g></Icon></StatusIcon>
          <ColorBox $c="#231f20" />
          <StatusText>C:0 M:0 Y:0 K:100  0.500 pt</StatusText>
        </StatusGroup>
      </StatusBar>
    </Window>
  );
}
